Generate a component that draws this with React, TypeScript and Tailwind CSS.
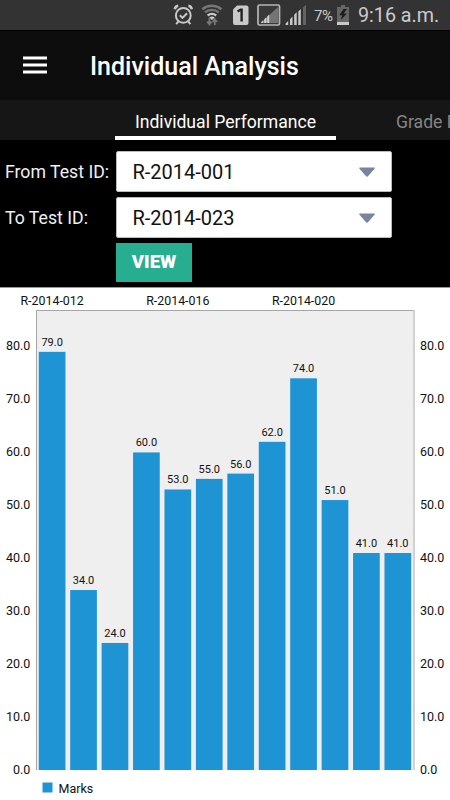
import React from 'react';

const marks = [79, 34, 24, 60, 53, 55, 56, 62, 74, 51, 41, 41];
const ticks = [0, 10, 20, 30, 40, 50, 60, 70, 80];
const testLabels = [
  { id: 'R-2014-012', index: 0 },
  { id: 'R-2014-016', index: 4 },
  { id: 'R-2014-020', index: 8 },
];

const PLOT_LEFT = 36.4;
const SLOT = 31.43;
const BASE = 483;
const UNIT = 5.293;

const StatusBar = () => (
  <div className="flex h-[30px] items-center bg-[#333333] pl-[173px] text-[#cccccc]">
    <svg width="140" height="30" viewBox="173 0 140 30" className="shrink-0">
      {/* alarm */}
      <g fill="none" stroke="#c9c9c9" strokeWidth="2">
        <circle cx="183.3" cy="15.4" r="7.4" />
        <path d="M179.8 15.2l2.7 2.7 4.6-4.7" />
        <path d="M174.8 9.2c.4-2 1.6-3.2 3.4-3.4M191.8 9.2c-.4-2-1.6-3.2-3.4-3.4" strokeWidth="2.6" />
        <path d="M178.4 21.4l-2.2 2.8M188.2 21.4l2.2 2.8" />
      </g>
      {/* wifi */}
      <g fill="none" strokeWidth="2.4">
        <path d="M202.4 9.2c5.6-4.6 13.4-4.6 19 0" stroke="#777" />
        <path d="M205 12.4c4.1-3.3 9.7-3.3 13.8 0" stroke="#777" />
        <path d="M207.6 15.4c2.7-1.9 5.9-1.9 8.6 0" stroke="#c9c9c9" />
      </g>
      <path d="M209.2 17.5c1.7-1.2 3.8-1.2 5.5 0L212 20z" fill="#c9c9c9" />
      <path
        d="M209.4 18v6M207.2 21.6l2.2 2.8 2.2-2.8M214.8 25v-5.6M212.6 22l2.2-2.8 2.2 2.8"
        fill="none"
        stroke="#777"
        strokeWidth="1.8"
      />
      {/* sim */}
      <path d="M237 5.5h9.5a2 2 0 0 1 2 2v15.5a2 2 0 0 1-2 2H235a2 2 0 0 1-2-2V9.5z" fill="#c9c9c9" />
      <path d="M237.6 11.6l3-2h1v11.9" fill="none" stroke="#222" strokeWidth="2.4" />
      {/* boxed signal */}
      <rect x="258" y="5" width="21.5" height="20" rx="1.5" fill="#393939" stroke="#b5b5b5" strokeWidth="1.7" />
      <path d="M261 23L278 7v16z" fill="#757575" />
      <path d="M261.2 23v-1l2-1.8V23zM264.2 23v-3.8l2.2-2V23zM267.2 23v-6.5l2-1.9V23z" fill="#d2d2d2" />
      {/* signal */}
      <path
        d="M285.6 25v-1.6l2.6-2.4V25zM290 25v-5.8l2.5-2.6V25zM294.2 25v-10.2l2.5-2.6V25zM298.3 25V11.6l2.5-2.6v16z"
        fill="#c9c9c9"
      />
      <path d="M303 25V7.6l3-2.8V25z" fill="#646464" />
    </svg>
    <span className="w-[23px] pl-[1px] pt-[2px] text-[15px] leading-none tracking-[-0.5px]">7%</span>
    <svg width="14" height="30" viewBox="336 0 14 30" className="shrink-0">
      <path d="M341 5h4v2h4v18h-12V7h4z" fill="#666" />
      <path d="M337 22h12v3h-12z" fill="#c9c9c9" />
      <path d="M343.5 9l-4.2 6.2h3l-1.5 5 6-6.6h-3.2L347 9z" fill="#1c1c1c" />
    </svg>
    <span className="ml-[8px] whitespace-nowrap pt-[2px] text-[19.7px] leading-none">9:16 a.m.</span>
  </div>
);

const TestSelect = ({ label, value }: { label: string; value: string }) => (
  <div className="flex h-[41px] items-center">
    <span className="w-[116px] shrink-0 pl-[5px] pt-[2px] text-[17.7px] text-[#f0f0f0]">{label}</span>
    <div className="flex h-[41px] w-[276px] items-center justify-between rounded-[2px] border border-[#bbbbbb] bg-white pl-[15.5px] pr-[15px]">
      <span className="pt-[1px] text-[20px] text-[#111111]">{value}</span>
      <svg width="18" height="12" viewBox="0 0 18 12">
        <path d="M2 1.5h14c.8 0 1 .7.5 1.3L10 10.3c-.6.6-1.4.6-2 0L1.5 2.8C1 2.2 1.2 1.5 2 1.5z" fill="#7984a0" />
      </svg>
    </div>
  </div>
);

const MarksChart = () => (
  <svg width="450" height="513" viewBox="0 0 450 513" className="block bg-white" fill="#111111">
    <path d="M0 .5h450" stroke="#999999" />
    <rect x="36" y="23" width="378" height="460" fill="#efefef" />
    <path d="M36.5 483V23.5H414" fill="none" stroke="#a5a5a5" />
    <path d="M414 23v460" stroke="#d2d2d2" strokeWidth="2" />
    {testLabels.map(({ id, index }) => (
      <text key={id} x={PLOT_LEFT + SLOT * (index + 0.5)} y="18" fontSize="12.4" textAnchor="middle">
        {id}
      </text>
    ))}
    {ticks.map((tick) => (
      <g key={tick} fontSize="12.5">
        <text x="30.3" y={BASE - tick * UNIT + 3.8} textAnchor="end">
          {tick.toFixed(1)}
        </text>
        <text x="419.9" y={BASE - tick * UNIT + 3.8}>
          {tick.toFixed(1)}
        </text>
      </g>
    ))}
    {marks.map((mark, index) => (
      <g key={index}>
        <rect
          x={PLOT_LEFT + SLOT * index + 2.36}
          y={BASE - mark * UNIT}
          width="26.7"
          height={mark * UNIT}
          fill="#1e94d5"
        />
        <text x={PLOT_LEFT + SLOT * (index + 0.5)} y={BASE - mark * UNIT - 6} fontSize="11" textAnchor="middle">
          {mark.toFixed(1)}
        </text>
      </g>
    ))}
    <rect x="42.5" y="495.5" width="10" height="10" fill="#1e94d5" />
    <text x="58.5" y="505.5" fontSize="12.5">
      Marks
    </text>
  </svg>
);

const App = () => {
  return (
    <div className="h-[800px] w-[450px] overflow-hidden bg-black font-['Roboto',sans-serif]">
      <StatusBar />
      <header className="flex h-[70px] items-center border-t border-black bg-[#0d0d0d] pl-[23px]">
        <svg width="24" height="18" viewBox="0 0 24 18" className="mb-[2px]">
          <path d="M0 2h24M0 9h24M0 16h24" stroke="#fff" strokeWidth="2.8" />
        </svg>
        <h1 className="ml-[43px] pt-[2px] text-[25px] font-medium leading-none text-white">Individual Analysis</h1>
      </header>
      <nav className="flex h-[40px] overflow-hidden whitespace-nowrap bg-[#161616] pl-[115px] text-[17.6px]">
        <div className="flex w-[221px] shrink-0 items-center justify-center border-b-4 border-white pt-[8px] text-white">
          Individual Performance
        </div>
        <div className="flex shrink-0 items-center pb-[4px] pl-[60px] pt-[8px] text-[#858585]">Grade Performance</div>
      </nav>
      <section className="flex h-[147px] flex-col gap-[5px] pt-[11px]">
        <TestSelect label="From Test ID:" value="R-2014-001" />
        <TestSelect label="To Test ID:" value="R-2014-023" />
        <button className="ml-[116px] h-[39px] w-[76px] bg-[#27ae91] text-[18.6px] font-black text-white">VIEW</button>
      </section>
      <MarksChart />
    </div>
  );
};

export default App;
